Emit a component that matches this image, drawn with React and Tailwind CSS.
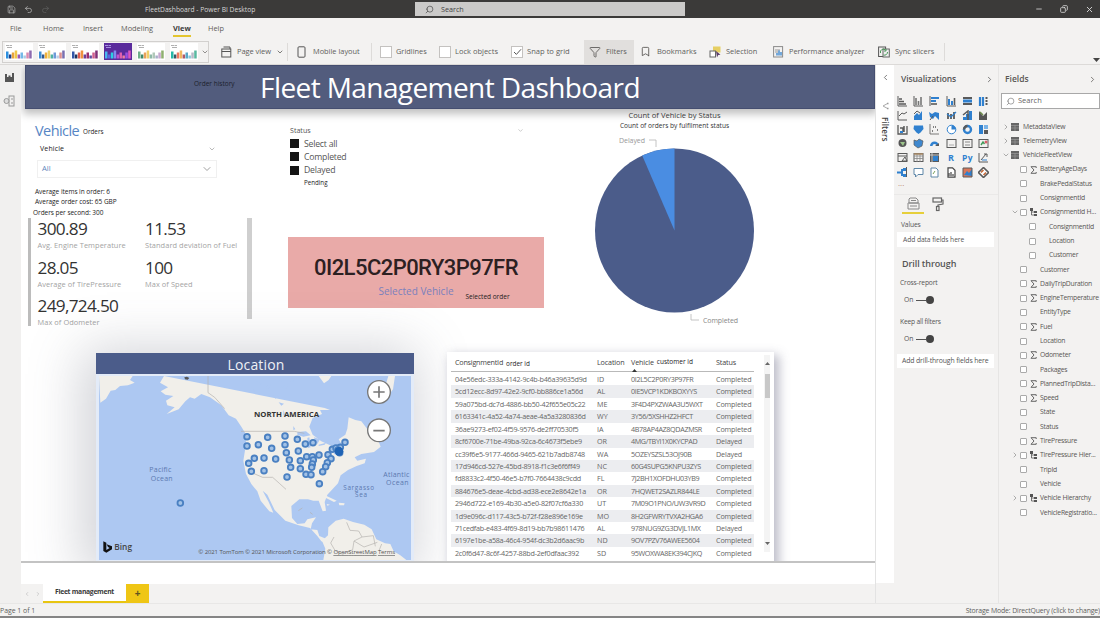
import React from "react";
import { ChevronDown, ChevronLeft, ChevronRight, Search, Undo2, Redo2, Save, Filter, Bookmark, Minus, X, Copy } from "lucide-react";

const B = "#2f80cf";
const D = "#5a5a5a";

/* ---------- title bar ---------- */
function TitleBar() {
  return (
    <header className="flex h-[18px] shrink-0 items-center bg-[#3b3a39] text-[#d6d6d6]">
      <div className="flex w-[145px] items-center gap-[8px] pl-[7px]">
        <Save size={9} strokeWidth={2} className="text-[#a8a8a8]" />
        <Undo2 size={9} strokeWidth={2} className="text-[#b4b4b4]" />
        <Redo2 size={9} strokeWidth={2} className="text-[#5e5e5e]" />
      </div>
      <div className="w-[270px] pt-[2px] text-[6.7px]">FleetDashboard - Power BI Desktop</div>
      <div className="flex h-[14px] w-[270px] items-center gap-[7px] bg-[#cbcac9] pl-[10px] text-[7.2px] text-[#444]">
        <Search size={9} strokeWidth={1.8} className="-scale-x-100" />
        <span>Search</span>
      </div>
      <div className="ml-auto flex items-center gap-[17px] pr-[6px]">
        <Minus size={8} strokeWidth={2.5} />
        <Copy size={8} strokeWidth={2.5} className="-scale-x-100" />
        <X size={9} strokeWidth={2.5} />
      </div>
    </header>
  );
}

/* ---------- ribbon ---------- */
const tabs = [
  ["File", "w-[33px]"],
  ["Home", "w-[40px]"],
  ["Insert", "w-[38px]"],
  ["Modeling", "w-[52px]"],
  ["View", "w-[35px]"],
  ["Help", "w-[30px]"],
];

function Tabs() {
  return (
    <nav className="flex h-[22px] shrink-0 pl-[10px] text-[7.4px] text-[#5f5d5b]">
      {tabs.map(([t, w]) => (
        <div key={t} className={`${w} flex items-start pt-[4px]`}>
          <span className={t === "View" ? "h-[15px] border-b-2 border-[#e3c52f] font-bold leading-[12px] text-[#3a3a3a]" : "leading-[12px]"}>{t}</span>
        </div>
      ))}
    </nav>
  );
}

const themes = [
  { bg: "#ffffff", c: ["#2b8fe0", "#1f3f86", "#e8a33d", "#f0c848", "#9b59b6", "#74b9e8", "#a9cce3", "#d98ab0", "#8e6bb0"] },
  { bg: "#ffffff", c: ["#3d8fd6", "#31588f", "#f1b13c", "#efd06a", "#4fb3a5", "#6f9ad8", "#b8cfe6", "#db8f8f", "#7a6fb0"] },
  { bg: "#ffffff", c: ["#3457a8", "#20365f", "#e05a4f", "#f0923e", "#6a3f96", "#9b2f6b", "#5b4fa0", "#cf5f8f", "#7e2f77"] },
  { bg: "#5a2b9c", c: ["#48b5f0", "#5868e0", "#2bd0e0", "#7f8cf0", "#c052d0", "#e05fae", "#ef7fa0", "#9a4fe0", "#e058c0"] },
  { bg: "#ffffff", c: ["#6fb08a", "#3f8a6a", "#e8a05a", "#f0cf6a", "#8fb8a8", "#b0c8b8", "#a8b0c8", "#c8a8d0", "#8fb070"] },
  { bg: "#ffffff", c: ["#28b8a8", "#3a5868", "#f07860", "#f0b860", "#b05868", "#58a8c8", "#88c8d8", "#b8b8c8", "#58b8a0"] },
];
const heights = [7, 4, 6, 8, 4, 6, 3, 6, 8];

function ThemeThumb({ t }) {
  return (
    <svg width="28" height="17" viewBox="0 0 28 17" className="shrink-0">
      <rect width="28" height="17" fill={t.bg} />
      <path d="M1 2.500h3.500M5 2.500h2M2 4.500h5" stroke={t.bg === "#ffffff" ? "#b0b0b0" : "#a58fe0"} strokeWidth="1" />
      {t.c.map((c, i) => (
        <rect key={i} x={1 + i * 2.9} y={15.5 - heights[i]} width="2.5" height={heights[i]} fill={c} />
      ))}
    </svg>
  );
}

function Check({ on }) {
  return (
    <span className="flex h-[12px] w-[12px] shrink-0 items-center justify-center border border-[#c4c2c0] bg-white">
      {on && (
        <svg width="9" height="8" viewBox="0 0 9 8"><path d="M1 4l2.4 2.4L8 1.3" fill="none" stroke="#555" strokeWidth="1" /></svg>
      )}
    </span>
  );
}

function Ribbon() {
  return (
    <div className="flex h-[25px] shrink-0 items-center border-b border-[#dcdad8] pb-px text-[7.1px] text-[#605e5c]">
      <div className="ml-[2px] flex h-[22px] w-[207px] shrink-0 items-center gap-[5px] border border-[#d2d0ce] pl-[2px]">
        {themes.map((t, i) => <ThemeThumb key={i} t={t} />)}
        <ChevronDown size={8} className="-ml-[2px] shrink-0" />
      </div>
      <div className="ml-[12px] flex h-[18px] w-[67px] shrink-0 items-center border-r border-[#dddbd9]">
        <svg width="11" height="12" viewBox="0 0 11 12" fill="none" stroke="#555" strokeWidth="1">
          <rect x=".8" y="3" width="9" height="8" /><path d="M.8 5.5h9M2.5 1h6.5v2" />
        </svg>
        <span className="ml-[5px] w-[38px] text-[7.500px] tracking-[-0.01em]">Page view</span>
        <ChevronDown size={8} strokeWidth={2.4} className="ml-px shrink-0" />
      </div>
      <div className="flex h-[18px] w-[84px] shrink-0 items-center border-r border-[#dddbd9] pl-[9px]">
        <svg width="9" height="12" viewBox="0 0 9 12" fill="none" stroke="#555"><rect x="1" y=".8" width="7" height="10.4" rx="1" /></svg>
        <span className="ml-[7px] text-[7.400px]">Mobile layout</span>
      </div>
      <div className="ml-[8px] flex w-[59px] shrink-0 items-center gap-[4px] text-[7.400px]"><Check /><span>Gridlines</span></div>
      <div className="flex w-[72px] shrink-0 items-center gap-[4px] text-[7.500px]"><Check /><span>Lock objects</span></div>
      <div className="flex w-[73px] shrink-0 items-center gap-[4px] text-[7.600px]"><Check on /><span>Snap to grid</span></div>
      <div className="flex h-[24px] w-[50px] shrink-0 items-center gap-[5px] bg-[#e1dfdd] pl-[5px] text-[7.400px]">
        <Filter size={12} strokeWidth={1.8} /><span>Filters</span>
      </div>
      <div className="flex w-[75px] shrink-0 items-center gap-[6px] pl-[6px] text-[7.500px]"><Bookmark size={11} strokeWidth={2} /><span>Bookmarks</span></div>
      <div className="flex w-[64px] shrink-0 items-center gap-[5px] text-[7.400px]">
        <svg width="12" height="12" viewBox="0 0 12 12">
          <rect x="4" y=".5" width="7.5" height="6" fill="#e6cf63" />
          <rect x="1" y="5" width="5.5" height="6" fill="#fff" stroke="#666" />
          <path d="M7 5l4.5 3.8-2.3.2L8 11.5z" fill="#5b3f6b" />
        </svg>
        <span>Selection</span>
      </div>
      <div className="flex w-[105px] shrink-0 items-center gap-[5px] text-[7.400px]">
        <svg width="11" height="12" viewBox="0 0 11 12" fill="none">
          <rect x=".6" y=".6" width="9" height="10.4" stroke="#8a8a8a" /><path d="M2 4h5M2 6h3" stroke="#999" />
          <path d="M4 9.5V7M6 9.5V4.5M8 9.5V6" stroke={B} strokeWidth="1.3" />
        </svg>
        <span>Performance analyzer</span>
      </div>
      <div className="flex h-[18px] w-[67px] shrink-0 items-center gap-[5px] border-r border-[#dddbd9] text-[7.400px]">
        <svg width="12" height="12" viewBox="0 0 12 12" fill="none">
          <rect x=".6" y="1" width="7" height="9.5" stroke="#555" /><rect x="5" y="3" width="6.3" height="8" fill="#eee" stroke="#666" />
          <path d="M2.5 7a3 3 0 0 1 5-3M8 3v2H6M9.5 6a3 3 0 0 1-4 3" stroke="#4a9a5a" />
        </svg>
        <span>Sync slicers</span>
      </div>
      <svg width="8" height="5" viewBox="0 0 8 5" className="ml-auto mt-[17px]"><path d="M1 0h7L4.500 4z" fill="#444" /></svg>
    </div>
  );
}

/* ---------- left rail ---------- */
function Rail() {
  return (
    <div className="flex w-[21px] shrink-0 flex-col items-center gap-[13px] bg-[#f1f0ef] pr-[3px] pt-[8px]">
      <svg width="9" height="9" viewBox="0 0 9 9"><path d="M0 1h2v3h1.500V2.500h2V4H7V0h2v9H0z" fill="#555" /></svg>
      <svg width="12" height="12" viewBox="0 0 12 12" fill="none" stroke="#999"><rect x="6" y="1" width="5" height="10" /><path d="M8 4h2M8 8h2" /><circle cx="3.500" cy="6" r="2.500" fill="#ddd" /></svg>
    </div>
  );
}

/* ---------- report: KPI column ---------- */
const kpis = [
  [["300.89", "Avg. Engine Temperature"], ["11.53", "Standard deviation of Fuel"]],
  [["28.05", "Average of TirePressure"], ["100", "Max of Speed"]],
  [["249,724.50", "Max of Odometer"], null],
];

function Kpi({ k }) {
  if (!k) return <div />;
  return (
    <div>
      <div className="h-[22px] text-[17.2px] leading-[20.500px] tracking-[-0.04em] text-[#333]">{k[0]}</div>
      <div className="h-[10px] text-[7.400px] leading-[9px] tracking-[0.01em] text-[#a3a3a3]">{k[1]}</div>
    </div>
  );
}

function KpiColumn() {
  return (
    <section className="w-[269px] shrink-0 whitespace-nowrap pl-[7px] pt-[12px]">
      <div className="flex h-[20px] items-center gap-[4px] pl-[7px]">
        <h2 className="text-[14.500px] tracking-[-0.04em] text-[#5685c4]">Vehicle</h2>
        <span className="pt-[2px] text-[6.3px] text-[#222]">Orders</span>
      </div>
      <div className="flex h-[16px] w-[190px] items-center justify-between pl-[12px] text-[7px] text-[#222]">
        <span className="tracking-[0.02em]">Vehicle</span>
        <ChevronDown size={8} className="mr-[2px] text-[#999]" />
      </div>
      <div className="ml-[9px] mt-[3px] flex h-[18px] w-[180px] items-center justify-between border border-[#f0f0f0] px-[4px] text-[7.6px] text-[#5f86bb]">
        <span>All</span>
        <ChevronDown size={12} strokeWidth={1.6} className="-mr-[1px] text-[#888]" />
      </div>
      <div className="mt-[8px] h-[31px] pl-[5px] pt-px text-[6.500px] leading-[10.300px] tracking-[-0.005em] text-[#222]">
        <div className="pl-[2px]">Average items in order: 6</div>
        <div className="pl-[2px]">Average order cost: 65 GBP</div>
        <div>Orders per second: 300</div>
      </div>
      <div className="mt-[1px] flex w-[224px] items-start">
        <div className="h-[108px] w-[3px] bg-[#bcbcbc]" />
        <div className="grid grow grid-cols-[107.500px_1fr] gap-y-[6.500px] pl-[6.500px] pt-[1px]">
          {kpis.flat().map((k, i) => <Kpi key={i} k={k} />)}
        </div>
        <div className="h-[101px] w-[5px] bg-[#cfcfcf]" />
      </div>
    </section>
  );
}

/* ---------- report: slicer + card ---------- */
function StatusColumn() {
  return (
    <section className="w-[256px] shrink-0 whitespace-nowrap pt-[15px] text-[#555]">
      <div className="flex h-[13px] items-center justify-between pl-[2px] pr-[20px] text-[7.1px]">
        <span>Status</span>
        <ChevronDown size={7} className="text-[#aaa]" />
      </div>
      {["Select all", "Completed", "Delayed"].map((s) => (
        <div key={s} className="flex h-[13.300px] items-center gap-[5px] pl-[2px] text-[8.7px]">
          <span className="h-[9px] w-[9px] bg-[#141414]" />
          <span className="pt-px tracking-[-0.025em]">{s}</span>
        </div>
      ))}
      <div className="h-[11px] pl-[16px] text-[6.2px] leading-[12px] text-[#222]">Pending</div>
      <div className="mt-[49px] flex h-[71px] w-[256px] flex-col items-center bg-[#e9aaa8]">
        <div className="mt-[17px] h-[26px] font-['Roboto'] text-[22px] font-medium leading-[27px] tracking-[-0.025em] text-[#2c2022]">0I2L5C2P0RY3P97FR</div>
        <div className="relative mt-[5px] h-[13px] text-[10px] leading-[12px] text-[#7a80bd]">
          Selected Vehicle
          <span className="absolute left-[87px] top-[6px] text-[6.500px] leading-[12px] text-[#1d1d1d]">Selected order</span>
        </div>
      </div>
    </section>
  );
}

/* ---------- report: pie ---------- */
function Pie() {
  return (
    <section className="ml-[51px] flex w-[159px] shrink-0 flex-col items-center whitespace-nowrap pt-px text-[#444]">
      <div className="h-[10px] text-[7.600px] leading-[10px]">Count of Vehicle by Status</div>
      <div className="h-[10px] text-[6.600px] leading-[11px] text-[#333]">Count of orders by fulfilment status</div>
      <svg width="159" height="200" viewBox="0 0 159 200" className="font-['Open_Sans']">
        <ellipse cx="79.500" cy="100.500" rx="79.500" ry="82" fill="#4b5c8a" />
        <path d="M79.500 100.500V18.500A79.500 82 0 0 0 47.200 25.600Z" fill="#4a8de2" />
        <path d="M54 10h7v7M96 184v6h8" fill="none" stroke="#b5b5b5" strokeWidth=".8" />
        <text x="24" y="12.500" fontSize="7" fill="#999" textLength="26">Delayed</text>
        <text x="108" y="193" fontSize="7" fill="#888" textLength="35">Completed</text>
      </svg>
    </section>
  );
}

/* ---------- report: map ---------- */
const pins = [
  [501, 288], [563, 290], [615, 286], [652, 296], [501, 316], [535, 312], [615, 312], [676, 310], [699, 306], [575, 323],
  [619, 336], [655, 331], [523, 353], [552, 352], [587, 355], [628, 358], [661, 360], [506, 368], [514, 392], [552, 390],
  [632, 380], [661, 384], [621, 409], [680, 348], [697, 348], [717, 343], [700, 358], [697, 370], [695, 380], [678, 401],
  [693, 402], [718, 429], [744, 342], [753, 354], [742, 366], [737, 378], [728, 393], [757, 326], [768, 322], [781, 320],
  [795, 305], [776, 332], [779, 336], [774, 328], [301, 487],
];

function MapCard() {
  return (
    <section className="mt-[13px] h-[212px] w-[318px] shrink-0 bg-[#e3ebf8] shadow-[-6px_4px_50px_8px_rgba(90,95,110,0.28)]">
      <h3 className="h-[21px] bg-[#4b5c8a] pl-[2px] text-center text-[14px] leading-[23px] tracking-[0.01em] text-[#eef0f6]">Location</h3>
      <svg width="312" height="184" viewBox="57 106 936 552" className="ml-[3px] mt-[2px] block font-['Open_Sans']">
        <rect x="57" y="106" width="936" height="552" fill="#adc8f2" />
        <g fill="#f1efea">
          <path d="M57 106h101l-8 12 14 8-20 8-24 2-14 12-14 2-14 24-17 12z" />
          <path d="M252 106l-12 20 24 14-22 12 14 10 24 4-22 14 4 14 22 6-24 20 36-14 20-24 14-12 14 4 20-14 26 10 34 24 22 30 22 10 16 24 12 20 2 32-8 50 8 40 16 30 18 22 10 28 26 32 12 4-14-32-18-34 14 12 22 46 32 32 40 14 34 8 22 24 12 16 22 8 6-12-14-4-20-8-6-18-20-2 4-18 12-18-26 6-8 12-22 2-16-18-2-36 24-20 26 0 16 4 16 0 12 32 10-2-4-26 8-22 32-34 8-24 22-16 26-12 24-8 4-14-26 6-8-10 20-10 38-6 20-16-8-20-30-30-20-26-18-4-20-8-4 34-6 18-20 14 12 20-10 30-16-6-2-22-36-16-26-20-10-24 10-26 28-12-6-12 30 0-16-6z" />
          <path d="M716 106l16 22 14-10 8-12zM925 106h20l-6 40-12 16-10-30z" />
          <path d="M745 560l22-20 24-6 28 10 34 8 22 14 14 30 26 12 16 2 10 22 20 12 18 14H730l6-34-10-24 18-16z" />
          <path d="M718 462l22 4 30 14-8 4-24-12-20-4zM776 486l18 2-2 6-14 0zM740 490l10 2-8 3z" />
        </g>
        <g fill="#adc8f2">
          <path d="M530 120l14 8-6 4-10-6zM552 140l20-8 4 6-20 8zM580 162l20 2-14 10zM596 185l16 4-8 6zM610 208l8 20-8-4zM516 145l8 6-10 4zM585 116l20 4-4 8zM622 120l16-10 2 14zM600 140l24-8-6 12z" />
          <path d="M652 274l26-2 14 12-22 4-18-6zM682 292l6-2 4 30-8 2zM702 290l18 6-8 14-6-6zM716 312l22-6-4 6-18 4zM742 302l16-4-8 6zM640 256l6 10-6 2z" />
          <path d="M760 170l10 8-8 2zM790 205l14 4-10 4zM776 222l12 2-8 6zM812 190l8 10-8-2zM744 240l8 8-6 2zM560 210l10 6-8 2z" />
        </g>
        <g fill="none" stroke="#b3b1ad" strokeWidth="2">
          <path d="M483 272h160l30 6M384 106v50l20 14 30 34M520 398l28 12 30 0 20 18 20 18" />
          <path d="M800 545l10 24 26 2 10 18-24 12-4 26-30 14-22-10-14-24 10-18M846 589l34-4 6 32M822 601l30 18 40-14M905 610l-8 20M655 510l12-8M690 515l8 6" />
        </g>
        <path d="M313 110l8-2 7 4-5 5-8-1z" fill="#555" />
        {pins.map(([x, y], i) => (
          <circle key={i} cx={x} cy={y} r="8.500" fill="#a3c2e6" stroke="#4a80c2" strokeWidth="5.500" />
        ))}
        <circle cx="777" cy="332" r="13" fill="#1f63b4" />
        <g fill="#fff" stroke="#777" strokeWidth="4">
          <circle cx="897" cy="154" r="34" /><circle cx="897" cy="269" r="34" />
          <path d="M880 154h34M897 137v34M880 270h34" strokeWidth="5" />
        </g>
        <text x="522" y="230" fontSize="21" fontWeight="700" fill="#333" textLength="195" lengthAdjust="spacingAndGlyphs">NORTH AMERICA</text>
        <g fontSize="21" fill="#5c78b0">
          <text x="208" y="395" textLength="66">Pacific</text><text x="212" y="421" textLength="66">Ocean</text>
          <text x="910" y="408" textLength="78">Atlantic</text><text x="918" y="434" textLength="68">Ocean</text>
          <text x="790" y="447" fontSize="19" textLength="92">Sargasso</text><text x="825" y="469" fontSize="19" textLength="36">Sea</text>
        </g>
        <path d="M70 602l9 4v22l10-6-5-3-4-8 16 6v9l-17 10-9-5z" fill="#111" />
        <text x="103" y="629" fontSize="25" fontWeight="600" fill="#444" textLength="53">Bing</text>
        <text x="355" y="641" fontSize="18" fill="#555" textLength="590">© 2021 TomTom  © 2021 Microsoft Corporation  © <tspan textDecoration="underline">OpenStreetMap</tspan>  <tspan textDecoration="underline">Terms</tspan></text>
      </svg>
    </section>
  );
}

/* ---------- report: table ---------- */
const rows = [
  ["04e56edc-333a-4142-9c4b-b46a39635d9d", "ID", "0I2L5C2P0RY3P97FR", "Completed"],
  ["5cd12ecc-8d97-42e2-9cf0-bb886ce1a56d", "AL", "0IE5VCP1KDKBOXYYS", "Completed"],
  ["59a075bd-dc7d-4886-bb50-42f655e05c22", "ME", "3F4D4PXZWAA3U5WXT", "Completed"],
  ["6163341c-4a52-4a74-aeae-4a5a3280836d", "WY", "3Y56/5XSHHZ2HFCT", "Completed"],
  ["36ae9273-ef02-4f59-9576-de2ff70530f5", "IA", "4B78AP4AZ8QDAZMSR", "Completed"],
  ["8cf6700e-71be-49ba-92ca-6c4673f5ebe9", "OR", "4MG/TBYI1X0KYCPAD", "Delayed"],
  ["cc39f6e5-9177-466d-9465-621b7adb8748", "WA", "5OZEYSZSL53OJ90B", "Delayed"],
  ["17d946cd-527e-45bd-8918-f1c3e6f6ff49", "NC", "60G4SUPG5KNPU3ZYS", "Completed"],
  ["fd8833c2-4f50-46e5-b7f0-7664438c9cdd", "FL", "7J2BH1XOFDHU03YB9", "Completed"],
  ["884676e5-deae-4cbd-ad38-ece2e8642e1a", "OR", "7HQWET2SAZLR844LE", "Completed"],
  ["2946d722-e169-4b30-a5e0-82f07cf6a330", "UT", "7M09O1PNO/UW3VR9D", "Completed"],
  ["1d9e096c-d117-43c5-b72f-f28e896e169e", "MO", "8H2GFWRYTVXA2HGA6", "Completed"],
  ["71cedfab-e483-4f69-8d19-bb7b98611476", "AL", "978NUG9ZG3DVJL1MX", "Delayed"],
  ["6197e1be-a58a-46c4-954f-dc3b2d6aac9b", "ND", "9OV7PZV76AWEE5604", "Completed"],
  ["2c0f6d47-8c6f-4257-88bd-2ef0dfaac392", "SD", "95WOXWA8EK394CJKQ", "Completed"],
];
const cols = "grid grid-cols-[142px_34px_85px_1fr]";

function TableCard() {
  return (
    <section className="ml-[33px] mt-[12px] h-[216px] w-[327px] shrink-0 whitespace-nowrap bg-white shadow-[4px_4px_10px_1px_rgba(95,95,125,0.42)]">
      <div className="flex">
        <div className="ml-[4px] w-[303px] text-[7.200px]">
          <div className={`${cols} h-[20px] border-b border-[#b9b9b9] pl-[4px] leading-[20px] text-[#444]`}>
            <div className="flex gap-[3px]"><span className="tracking-[-0.03em]">ConsignmentId</span><span className="pt-[2px] text-[6.4px] leading-[20px] text-[#222]">order id</span></div>
            <div className="tracking-[-0.02em]">Location</div>
            <div className="relative flex gap-[3px]"><span className="tracking-[-0.02em]">Vehicle</span> <span className="text-[6.500px] text-[#222]">customer id</span>
              <svg width="5" height="3" viewBox="0 0 5 3" className="absolute bottom-[2px] left-[1px]"><path d="M2.500 0L5 3H0z" fill="#333" /></svg>
            </div>
            <div className="tracking-[-0.02em]">Status</div>
          </div>
          <div className="pt-[1px]">
            {rows.map((r, i) => (
              <div key={r[0]} className={`${cols} h-[12.430px] pl-[4px] leading-[12.430px] text-[#666] ${i % 2 ? "bg-[#ecedf0]" : "bg-white"}`}>
                <div className="tracking-[-0.034em]">{r[0]}</div>
                <div>{r[1]}</div>
                <div className="tracking-[-0.05em]">{r[2]}</div>
                <div className="tracking-[-0.02em]">{r[3]}</div>
              </div>
            ))}
          </div>
        </div>
        <div className="ml-[10px] mt-[3px] flex h-[197px] w-[6px] flex-col items-center bg-[#f4f4f4] pt-[7px]">
          <svg width="5" height="3" viewBox="0 0 5 3"><path d="M2.500 0L5 3H0z" fill="#666" /></svg>
          <div className="mt-[9px] h-[24px] w-[5px] bg-[#c8c8c8]" />
          <svg width="5" height="3" viewBox="0 0 5 3" className="mt-auto mb-[7px]"><path d="M0 0h5L2.500 3z" fill="#666" /></svg>
        </div>
      </div>
    </section>
  );
}

/* ---------- report ---------- */
function Report() {
  return (
    <main className="flex w-[855px] shrink-0 flex-col border-r border-[#e3e3e3] bg-[#f3f2f1]">
      <div className="h-[498px] shrink-0 overflow-hidden border-b-2 border-[#c3c3c3] bg-white">
        <div className="relative ml-[4px] flex h-[44px] w-[850px] items-center justify-center border border-[#454e70] bg-[#525c7d] shadow-[0_3px_8px_2px_rgba(0,0,0,0.25)]">
          <span className="absolute left-[168px] top-[13px] text-[6.500px] text-[#1c1f2c]">Order history</span>
          <h1 className="text-[28px] leading-[44px] tracking-[-0.021em] text-white">Fleet Management Dashboard</h1>
        </div>
        <div className="flex h-[231px]">
          <KpiColumn />
          <div className="-ml-[2px]"><StatusColumn /></div>
          <Pie />
        </div>
        <div className="flex pl-[75px]">
          <MapCard />
          <TableCard />
        </div>
      </div>
      <div className="h-[21px] shrink-0 bg-white" />
      <div className="flex h-[19px] shrink-0">
        <div className="flex w-[22px] items-center justify-around text-[#aaa]"><ChevronLeft size={6} /><ChevronRight size={6} /></div>
        <div className="flex w-[83px] items-center justify-center border-b-2 border-[#e8c511] bg-white text-[6.8px] font-bold tracking-[-0.045em] text-[#3a3a3a]">Fleet management</div>
        <div className="flex w-[23px] items-center justify-center bg-[#efc615] text-[10px] font-bold text-[#5e5420]">+</div>
      </div>
    </main>
  );
}

/* ---------- filters strip ---------- */
function FiltersStrip() {
  return (
    <aside className="flex h-[518px] w-[18px] shrink-0 flex-col items-center bg-white pt-[8px] text-[#555]">
      <ChevronLeft size={9} />
      <svg width="8" height="8" viewBox="0 0 8 8" className="mt-[20px]"><path d="M6.500 1.500L2 4l4.500 2.500" fill="none" stroke="#aaa" /><path d="M6 .8h1.500v1.500H6zM6 5.800h1.500v1.500H6z" fill="#999" /></svg>
      <span className="mt-[7px] h-[28px] text-[8.200px] font-semibold leading-[9px] text-[#444] [writing-mode:vertical-rl]">Filters</span>
    </aside>
  );
}

/* ---------- visualizations ---------- */
const box = <rect x="1" y="1.500" width="9" height="8" fill="none" stroke={D} />;
const vizIcons = [
  <><path d="M1 0v10h9" stroke={D} /><path d="M2 3h3M2 5.500h5M2 8h7" stroke={D} strokeWidth="1.700" /></>,
  <><path d="M1 0v10h9" stroke={D} /><path d="M3 9V2M5.500 9V5M8 9V1" stroke="#777" strokeWidth="1.600" /></>,
  <><path d="M1 0v10" stroke={D} /><path d="M2 2h8M2 5h5" stroke={B} strokeWidth="2" /><path d="M2 8h6" stroke={D} strokeWidth="1.600" /></>,
  <><path d="M1 0v10h9" stroke={D} /><path d="M3 9V3M6 9V5" stroke={B} strokeWidth="2" /><path d="M8.500 9V2" stroke={D} strokeWidth="1.600" /></>,
  <><path d="M1 2h9M1 8h9" stroke={D} strokeWidth="2" /><path d="M1 5h9" stroke={B} strokeWidth="3" /></>,
  <><path d="M2 1v9M5 1v9" stroke={B} strokeWidth="2.200" /><path d="M8.500 1v9" stroke={D} strokeWidth="2" strokeDasharray="2 1" /></>,
  <><path d="M1 1v9h9M2 6l3-3 2 1 3-2" stroke={D} /></>,
  <><path d="M1 10V6l3-3 2 2 3-4v9z" fill={B} /><path d="M1 4l3-3 3 2" stroke={D} /></>,
  <><path d="M0 2l3 2 3-2 4 1v7L6 6 4 9 1 7z" fill={B} /><path d="M1 10l3-4" stroke={D} /></>,
  <><path d="M2 9V3M5 9V4M8 9V2" stroke={D} strokeWidth="1.800" /><path d="M1 4l4 3 5-5" stroke={B} strokeWidth="1.300" /></>,
  <><path d="M1 10V7h3V4h3V1h3v9z" fill={B} /><path d="M1 5l5-4v9" stroke={D} strokeWidth="1.500" /></>,
  <><path d="M1 1v9h8V2L5 6z" fill="#555" /><path d="M2 2l3 3" stroke="#6b8a4a" strokeWidth="1.500" /></>,
  <><path d="M1 1v9h9V2" stroke={D} strokeWidth="1.300" /><path d="M3 4h3v4M7 2v6" stroke={D} strokeWidth="1.500" /><path d="M3 8h3" stroke={B} strokeWidth="2" /></>,
  <path d="M1 1.500h9l.5 3.500-3 3.500-2 1.500-2-1.500-3-3.500z" fill={B} />,
  <><path d="M1 0v10h9" stroke={D} strokeWidth=".8" /><path d="M3 7h1M6 3h1M8 6h1M4 3h1" stroke={D} strokeWidth="1.600" /></>,
  <><circle cx="5.500" cy="5.500" r="4.300" fill="#fff" stroke={B} /><path d="M5.500 5.500V1.200a4.300 4.300 0 0 1 4.300 4.300z" fill={B} /></>,
  <><circle cx="5.500" cy="5.500" r="3.500" stroke={B} strokeWidth="2.400" /><path d="M2 5.500a3.500 3.500 0 0 1 3.500-3.500" stroke={D} strokeWidth="2.400" /></>,
  <><rect x="1" y="1" width="4" height="9" fill={B} /><rect x="6" y="1" width="4" height="4" fill="#79b2e6" /><rect x="6" y="6" width="4" height="4" fill={D} /></>,
  <><circle cx="5.500" cy="5" r="4" fill="#555" /><path d="M3 4h5l-2 4z" fill="#9cc48a" /></>,
  <path d="M1 2l3 1 2-2 4 2-1 5-4 2-4-3z" fill="#3f88cf" stroke={D} strokeWidth=".7" />,
  <><path d="M1 8a4.500 4.500 0 0 1 9 0H7.500a2 2 0 0 0-4 0z" fill={B} /><path d="M6 8l4-3v3z" fill={D} /></>,
  <>{box}<path d="M3 7h5" stroke="#aaa" /></>,
  <>{box}<path d="M3 4h5M3 7h5" stroke="#888" /></>,
  <>{box}<path d="M3 7l2-3 1.500 2" stroke="#3f9a5a" strokeWidth="1.400" /><circle cx="8" cy="4" r="1.500" fill="#d8606a" /></>,
  <>{box}<path d="M1 4h9M5 9l3-4 2 4z" stroke={D} /></>,
  <>{box}<path d="M1 4h9M1 6.500h9M4 2v8M7 2v8" stroke="#888" strokeWidth=".8" /><path d="M1 2h9" stroke="#a98b6a" strokeWidth="1.600" /></>,
  <><rect x="1" y="1" width="9" height="9" fill={D} /><rect x="4" y="4" width="5" height="5" fill={B} /><path d="M1 3h9M3 1v9" stroke="#ddd" strokeWidth=".8" /></>,
  <text x="2" y="9" fontSize="9" fontWeight="700" fill={B}>R</text>,
  <text x="0" y="8.500" fontSize="8.500" fontWeight="700" fill={B} textLength="10.500">Py</text>,
  <><path d="M1 1v9h9" stroke={D} /><path d="M3 8l5-6M6 2h3v3" stroke={D} /><path d="M4 8h5" stroke={B} /></>,
  <><path d="M0 5.500h5M5 2v7" stroke={B} strokeWidth="2" /><path d="M6 1h3v3H6zM6 7h3v3H6z" fill={B} /><path d="M9.500 0v10" stroke={D} /></>,
  <path d="M1 1.500h9v6H5l-2.500 2.500V7.500H1z" fill="#fff" stroke="#5e87a8" />,
  <><path d="M2 1h5l2 2v7H2z" fill="#fff" stroke="#5e87a8" /><path d="M4 7l2-3" stroke="#7aa05a" /></>,
  <><path d="M2 .8h4.500l2.500 2.500v6.900H2z" fill="#fff" stroke="#444" strokeWidth="1.200" /><path d="M3 9V6M5 9V5M7 9V7" stroke="#444" strokeWidth="1.200" /></>,
  <><rect x="1" y="1" width="9" height="9" fill="#d9775a" /><path d="M2 8l3-4 2 2 3-4v7z" fill={B} /><path d="M1 1h9v9H1z" stroke={D} /></>,
  <><path d="M5.500 .5l5 5-5 5-5-5z" fill="#fff" stroke={D} strokeWidth="1.600" /><path d="M3 5.500l2.500-2.500M5.500 8L8 5.500" stroke="#c46a3a" strokeWidth="1.600" /></>,
];

function Toggle() {
  return (
    <div className="flex items-center gap-[3px] pl-[10px] text-[6.800px] text-[#555]">
      <span>On</span>
      <span className="flex items-center"><span className="h-px w-[10px] bg-[#555]" /><span className="h-[8px] w-[8px] rounded-full bg-[#444]" /></span>
    </div>
  );
}

function Visualizations() {
  return (
    <aside className="flex w-[105px] shrink-0 flex-col whitespace-nowrap border-r border-[#e6e5e4] text-[#555]">
      <div className="flex h-[29px] items-center justify-between pl-[7px] pr-[4px] text-[8.500px] font-semibold">
        <span className="tracking-[-0.01em]">Visualizations</span><ChevronRight size={9} />
      </div>
      <div className="grid grid-cols-[repeat(6,16.200px)] grid-rows-[repeat(6,14.200px)] items-center pl-[3px]">
        {vizIcons.map((ic, i) => <svg key={i} width="11" height="11" viewBox="0 0 11 11" fill="none">{ic}</svg>)}
      </div>
      <div className="h-[15px] pl-[4px] text-[8px] leading-[7px] text-[#b9846a]">...</div>
      <div className="flex h-[20px] items-end gap-[8px] border-t border-[#eae9e8] pl-[8px]">
        <div className="flex h-[20px] w-[22px] justify-center border-b-2 border-[#e6cf3a] pt-[3px]">
          <svg width="13" height="14" viewBox="0 0 13 14" fill="none" stroke="#888"><path d="M3 1h6l2 2v3H2V2zM1 6h11v6H1z" /><path d="M4 3.500h5M3 9h7" /></svg>
        </div>
        <svg width="12" height="15" viewBox="0 0 12 15" fill="none" stroke="#666" strokeWidth="1.200" className="mb-[2px]"><rect x="1" y="1" width="8.500" height="4" /><path d="M9.500 3H11v4L6 8v2" /><rect x="4.500" y="9.500" width="2.500" height="4" /></svg>
      </div>
      <div className="mt-[4px] h-[12px] pl-[7px] text-[6.700px] leading-[13px] tracking-[-0.02em]">Values</div>
      <div className="ml-[3px] mt-[2px] h-[15px] w-[97px] bg-white pl-[6px] text-[6.700px] leading-[16px] tracking-[-0.01em]">Add data fields here</div>
      <div className="mt-[8px] h-[16px] pl-[8px] text-[9px] font-semibold leading-[17px] tracking-[-0.01em]">Drill through</div>
      <div className="mt-[6px] h-[12px] pl-[6px] text-[6.700px] leading-[12px] tracking-[-0.02em]">Cross-report</div>
      <div className="mt-[6px] h-[14px]"><Toggle /></div>
      <div className="mt-[7px] h-[12px] pl-[6px] text-[6.700px] leading-[12px] tracking-[-0.03em]">Keep all filters</div>
      <div className="mt-[6px] h-[14px]"><Toggle /></div>
      <div className="ml-[3px] mt-[6px] h-[14px] w-[97px] bg-white pl-[5px] text-[6.900px] leading-[14px] tracking-[-0.02em]">Add drill-through fields here</div>
    </aside>
  );
}

/* ---------- fields ---------- */
const fields = [
  ["MetadataView", "t", ">"], ["TelemetryView", "t", ">"], ["VehicleFleetView", "t", "v"],
  ["BatteryAgeDays", "s"], ["BrakePedalStatus", ""], ["ConsignmentId", ""], ["ConsignmentId H...", "h", "v"],
  ["ConsignmentId", "c"], ["Location", "c"], ["Customer", "c"], ["Customer", ""],
  ["DailyTripDuration", "s"], ["EngineTemperature", "s"], ["EntityType", ""], ["Fuel", "s"], ["Location", ""],
  ["Odometer", "s"], ["Packages", ""], ["PlannedTripDista...", "s"], ["Speed", "s"], ["State", ""], ["Status", ""],
  ["TirePressure", "s"], ["TirePressure Hier...", "h", ">"], ["TripId", ""], ["Vehicle", ""],
  ["Vehicle Hierarchy", "h", ">"], ["VehicleRegistratio...", ""],
];

function FieldRow({ f }) {
  const [name, kind, arrow] = f;
  const Arrow = arrow === "v" ? ChevronDown : ChevronRight;
  if (kind === "t") {
    return (
      <div className="flex h-[14.300px] items-center pl-[3px]">
        <Arrow size={8} className="mr-[1px] shrink-0 text-[#888]" />
        <svg width="8" height="8" viewBox="0 0 8 8" className="shrink-0"><rect width="8" height="8" fill="#666" /><path d="M0 2.500h8M0 5h8M4 2v6" stroke="#9a9a9a" strokeWidth=".7" /></svg>
        <span className="ml-[4px]">{name}</span>
      </div>
    );
  }
  return (
    <div className={`flex h-[14.300px] items-center ${kind === "c" ? "pl-[21px]" : "pl-[12px]"}`}>
      <span className="w-[9px] shrink-0">{arrow && <Arrow size={8} className="text-[#888]" />}</span>
      <span className="h-[7px] w-[7px] shrink-0 rounded-[1px] border border-[#aaa] bg-white" />
      <span className="ml-[2px] flex w-[8px] shrink-0 justify-center">
        {kind === "s" && <svg width="7" height="8" viewBox="0 0 7 8"><path d="M6.200 2V.7H1L4 4 1 7.300h5.200V6" fill="none" stroke="#666" /></svg>}
        {kind === "h" && <svg width="7" height="8" viewBox="0 0 7 8" fill="#555"><rect width="3" height="3" /><rect x="4" y="3" width="3" height="2" /><rect x="4" y="6" width="3" height="2" /><path d="M1.500 2v5H4M1.500 4H4" fill="none" stroke="#555" strokeWidth=".8" /></svg>}
      </span>
      <span className="ml-[3px]">{name}</span>
    </div>
  );
}

function Fields() {
  return (
    <aside className="w-[101px] shrink-0 overflow-hidden whitespace-nowrap text-[#595754]">
      <div className="flex h-[28px] items-center justify-between pl-[6px] pr-[3px] pt-px text-[8.500px] font-semibold">
        <span>Fields</span><ChevronRight size={9} />
      </div>
      <div className="ml-[2px] flex h-[16px] w-[99px] items-center gap-[3px] border border-[#a8a8a8] bg-white pl-[4px] text-[7.500px] text-[#666]">
        <Search size={9} strokeWidth={1.500} className="-scale-x-100" /><span>Search</span>
      </div>
      <div className="pt-[10.500px] text-[6.800px] tracking-[-0.035em]">
        {fields.map((f, i) => <FieldRow key={i} f={f} />)}
      </div>
    </aside>
  );
}

export default function App() {
  return (
    <div className="flex h-[618px] w-[1100px] flex-col overflow-hidden bg-[#f3f2f1] font-['Open_Sans','Noto_Sans',sans-serif]">
      <TitleBar />
      <Tabs />
      <Ribbon />
      <div className="flex h-[538px] shrink-0">
        <Rail />
        <Report />
        <FiltersStrip />
        <Visualizations />
        <Fields />
      </div>
      <footer className="flex h-[15px] shrink-0 items-center justify-between whitespace-nowrap border-b-2 border-t border-b-[#858585] border-t-[#e8e7e6] pt-[3px] text-[6.900px] text-[#605e5c]">
        <span>Page 1 of 1</span>
        <span className="tracking-[-0.02em]">Storage Mode: DirectQuery (click to change)</span>
      </footer>
    </div>
  );
}
